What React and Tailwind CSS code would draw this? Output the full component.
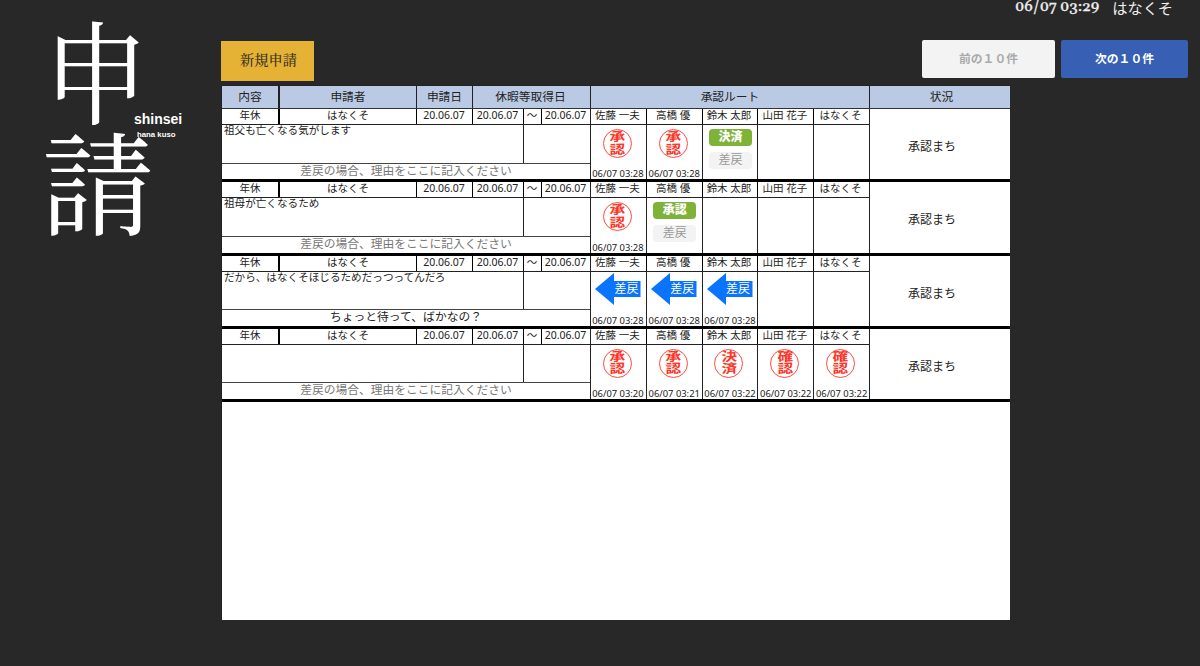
const HEADERS = ["内容", "申請者", "申請日", "休暇等取得日", "承認ルート", "状況"];
const APPROVERS = ["佐藤 一夫", "高橋 優", "鈴木 太郎", "山田 花子", "はなくそ"];
const PLACEHOLDER = "差戻の場合、理由をここに記入ください";

const RECORDS = [
  {
    text: "祖父も亡くなる気がします",
    reason: "",
    steps: [
      { type: "stamp", label: "承認", date: "06/07 03:28" },
      { type: "stamp", label: "承認", date: "06/07 03:28" },
      { type: "action", label: "決済" },
      null,
      null,
    ],
  },
  {
    text: "祖母が亡くなるため",
    reason: "",
    steps: [
      { type: "stamp", label: "承認", date: "06/07 03:28" },
      { type: "action", label: "承認" },
      null,
      null,
      null,
    ],
  },
  {
    text: "だから、はなくそほじるためだっつってんだろ",
    reason: "ちょっと待って、ばかなの？",
    steps: [
      { type: "back", date: "06/07 03:28" },
      { type: "back", date: "06/07 03:28" },
      { type: "back", date: "06/07 03:28" },
      null,
      null,
    ],
  },
  {
    text: "",
    reason: "",
    steps: [
      { type: "stamp", label: "承認", date: "06/07 03:20" },
      { type: "stamp", label: "承認", date: "06/07 03:21" },
      { type: "stamp", label: "決済", date: "06/07 03:22" },
      { type: "stamp", label: "確認", date: "06/07 03:22" },
      { type: "stamp", label: "確認", date: "06/07 03:22" },
    ],
  },
];

function Stamp({ label }) {
  return (
    <div className="mt-[4px] mr-[2px] flex size-[29px] flex-col items-center justify-center rounded-full border border-[#ff4a3d] text-[12.500px] leading-[12.500px] font-bold text-[#fb3528]">
      <span className="scale-x-125 -skew-y-3">{label[0]}</span>
      <span className="scale-x-125 -skew-y-3">{label[1]}</span>
    </div>
  );
}

function Actions({ label }) {
  return (
    <div className="mt-[4px] flex flex-col items-center gap-[6px] pl-px text-[12px] leading-[15px]">
      <button className="h-[17px] w-[43px] rounded-[4px] bg-[#7eb338] pb-[2px] font-black text-white">{label}</button>
      <button className="h-[17px] w-[43px] rounded-[4px] bg-[#f3f3f3] pb-[2px] text-[#999]">差戻</button>
    </div>
  );
}

function BackArrow() {
  return (
    <div className="relative mt-px h-[32px] w-[46px]">
      <svg className="block" width="46" height="32" viewBox="0 0 46 32">
        <path d="M0 16 19 0V8H45.500V24H19V32Z" fill="#0a74ff" />
      </svg>
      <span className="absolute top-[8px] left-[19px] text-[12px] leading-[16px] text-white">差戻</span>
    </div>
  );
}

function Step({ step, first }) {
  return (
    <div className="flex min-w-0 flex-1 flex-col items-center justify-between border-r border-[#222] last:border-r-0">
      {step?.type === "stamp" && <Stamp label={step.label} />}
      {step?.type === "action" && <Actions label={step.label} />}
      {step?.type === "back" && <BackArrow />}
      {step?.date && (
        <span className={first ? "mr-[1px] text-[9.400px] leading-[10px]" : "text-[9.400px] leading-[11px]"}>
          {step.date}
        </span>
      )}
    </div>
  );
}

function Record({ record }) {
  return (
    <div className="flex h-[73.25px] border-b-3 border-black text-[10.500px] leading-[13px] text-[#222]">
      <div className="flex w-[369px] flex-col border-r border-[#222]">
        <div className="flex h-[16px] border-b border-[#222] text-center">
          <div className="w-[58px] border-r-2 border-black">年休</div>
          <div className="w-[137px] border-r border-black">はなくそ</div>
          <div className="w-[56px] border-r border-black pr-px">20.06.07</div>
          <div className="w-[51px] border-r border-black pr-px">20.06.07</div>
          <div className="w-[18px] border-r border-black pr-px">～</div>
          <div className="flex-1 pr-px">20.06.07</div>
        </div>
        <div className="flex h-[38.500px] border-b border-[#444]">
          <div className="w-[302px] border-r border-[#222] pl-[2px] text-[10.600px] leading-[11px]">{record.text}</div>
        </div>
        <div className={`min-h-0 flex-1 text-center text-[11.750px] leading-[13px] ${record.reason ? "text-[#222]" : "text-[#777]"}`}>
          {record.reason || PLACEHOLDER}
        </div>
      </div>
      <div className="flex w-[279px] flex-col border-r border-[#222]">
        <div className="flex h-[16px] border-b border-[#222] text-center">
          {APPROVERS.map((name) => (
            <div key={name} className="flex-1 border-r border-black pr-[2px] last:border-r-0">{name}</div>
          ))}
        </div>
        <div className="flex min-h-0 flex-1">
          {record.steps.map((step, i) => (
            <Step key={i} step={step} first={i === 0} />
          ))}
        </div>
      </div>
      <div className="flex flex-1 items-center justify-center pt-[5px] pr-[16px] text-[12px]">承認まち</div>
    </div>
  );
}

export default function App() {
  return (
    <div className="flex h-[666px] w-[1200px] overflow-hidden bg-[#282828] font-['Noto_Sans','Noto_Sans_CJK_JP',sans-serif] whitespace-nowrap">
      <aside className="relative w-[221px] pt-[12px] pl-[42px]">
        <h1 className="flex w-[112px] flex-col font-['Noto_Serif_CJK_JP','Noto_Serif_JP','Noto_Sans_CJK_JP',serif] text-[112px] leading-[111px] font-normal text-white">
          <span className="-ml-[2px] origin-center scale-x-[0.95]">申</span>
          <span>請</span>
        </h1>
        <div className="absolute top-[112px] left-[134px] font-['Liberation_Sans',sans-serif] font-bold text-white">
          <p className="text-[14px] leading-[15px]">shinsei</p>
          <p className="pl-[3px] text-[7.800px] leading-[15px]">hana kuso</p>
        </div>
      </aside>
      <main className="flex w-[979px] flex-col">
        <header className="flex h-[40px] justify-end gap-[13px] pr-[27px] text-[#eee]">
          <span className="-mt-[3px] font-['Georgia','Gelasio','Liberation_Serif',serif] text-[14.700px] leading-[20px] font-medium [-webkit-text-stroke:0.3px_#eee]">06/07 03:29</span>
          <span className="-mt-[2px] text-[15.200px] leading-[20px]">はなくそ</span>
        </header>
        <div className="flex h-[45px] items-start justify-between pr-[12px]">
          <button className="mt-[0.500px] h-[40px] w-[93px] bg-[#e5b236] pb-[2px] pl-[2px] font-['Noto_Serif_CJK_JP','Noto_Serif_JP','Noto_Sans_CJK_JP',serif] text-[14.200px] font-medium text-[#3c3420]">新規申請</button>
          <div className="flex gap-[6px] pt-[0.400px] text-[11.800px] font-bold">
            <button className="h-[38px] w-[133px] rounded-[2px] bg-[#f3f3f3] pb-[2px] text-[#aaa]">前の１０件</button>
            <button className="h-[38px] w-[127px] rounded-[2px] bg-[#3760b4] pb-[2px] text-white">次の１０件</button>
          </div>
        </div>
        <section className="h-[535px] w-[789px] border-l border-t border-[#222] bg-white">
          <div className="flex h-[23px] border-b border-[#333] bg-[#bacae4] text-center text-[11.750px] leading-[21px] text-[#222]">
            <div className="w-[58px] border-r-2 border-[#222]">{HEADERS[0]}</div>
            <div className="w-[137px] border-r border-[#222]">{HEADERS[1]}</div>
            <div className="w-[56px] border-r border-[#222]">{HEADERS[2]}</div>
            <div className="w-[118px] border-r border-[#222] pr-[2px]">{HEADERS[3]}</div>
            <div className="w-[279px] border-r border-[#222]">{HEADERS[4]}</div>
            <div className="flex-1 pl-[3px]">{HEADERS[5]}</div>
          </div>
          {RECORDS.map((record, i) => (
            <Record key={i} record={record} />
          ))}
        </section>
      </main>
    </div>
  );
}
